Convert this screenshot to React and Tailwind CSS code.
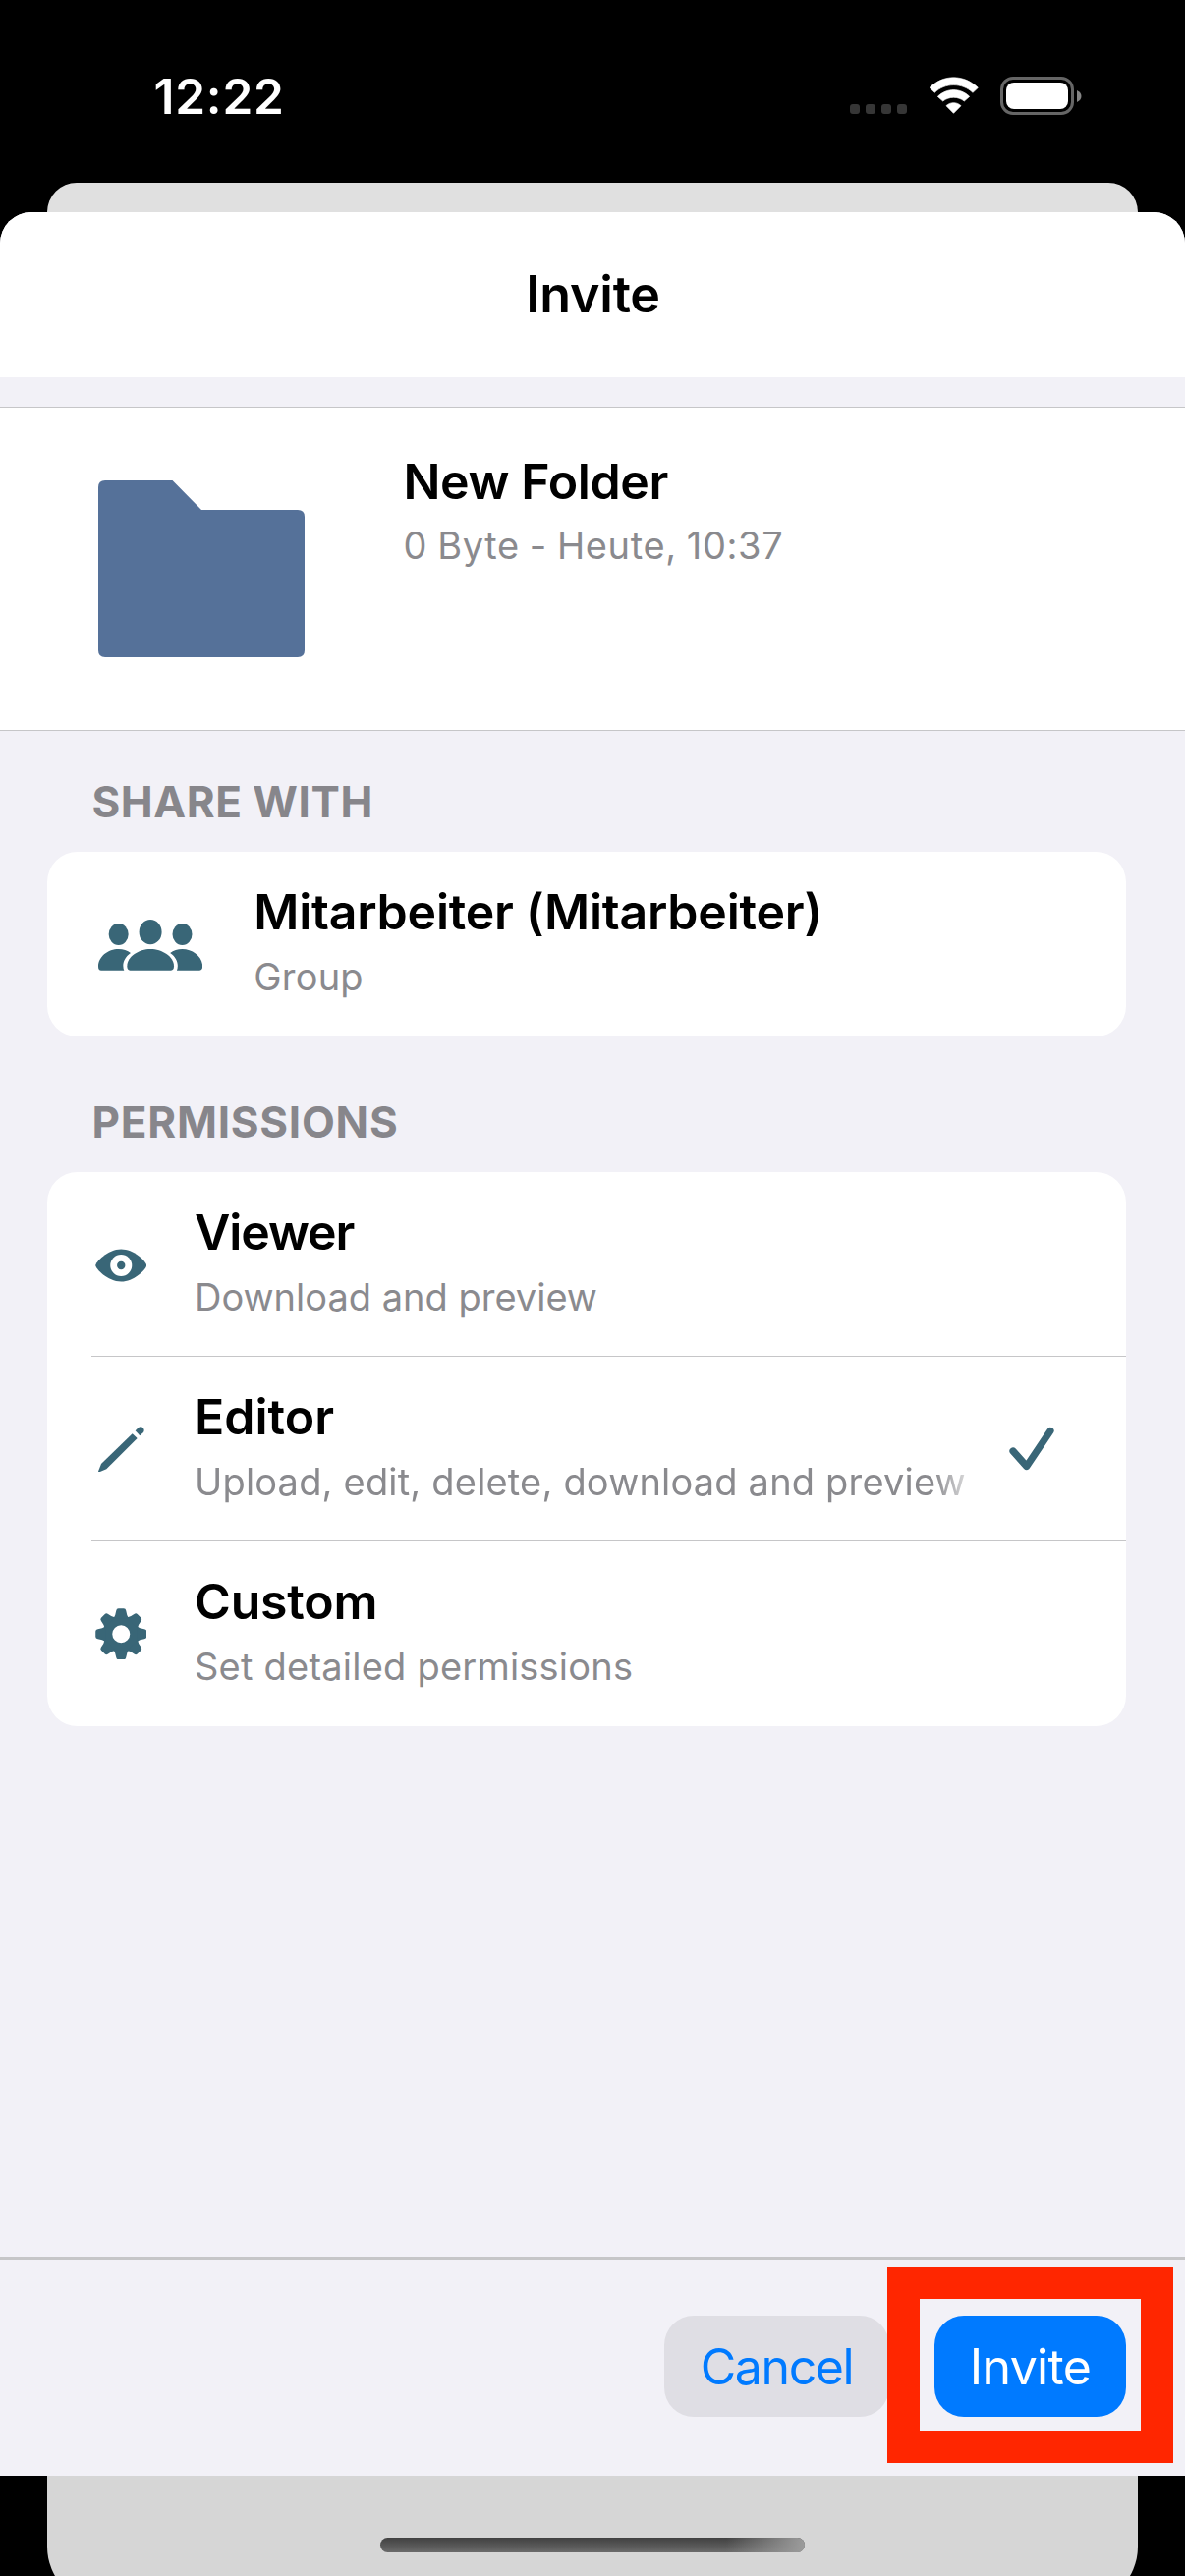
import React from "react";

const TEAL = "#396677";

function WifiIcon() {
  return (
    <svg width="51.33" height="38.33" viewBox="270 40 154 115" fill="#fff" stroke="#fff" strokeWidth="2" strokeLinejoin="round">
      <path d="M273 74C315 32 378 32 421 74L405 89C373 58 320 58 289 89Z" />
      <path d="M298 101C326 74 367 74 395 101L379 115C360 100 333 100 314 115Z" />
      <path d="M324 129C337 117 356 117 369 129L346.500 152Z" />
    </svg>
  );
}

function BatteryIcon() {
  return (
    <div className="flex items-center gap-[3px]">
      <div className="h-[39px] w-[75px] rounded-[13px] border-[3px] border-[#666] p-[3px]">
        <div className="h-full w-full rounded-[8px] bg-white" />
      </div>
      <svg width="4.500" height="12" viewBox="0 0 4.500 12" fill="#858585">
        <path d="M0 0C6 2.500 6 9.500 0 12Z" />
      </svg>
    </div>
  );
}

function StatusBar() {
  return (
    <div className="flex h-[186px] shrink-0 items-start justify-between pt-[68px] pr-[105.500px] pl-[156.500px] text-white">
      <span className="text-[49.500px] leading-[60px] font-semibold tracking-[0.8px]">12:22</span>
      <div className="flex h-[59px] items-center">
        <div className="mt-[27px] flex gap-[6px]">
          {[0, 1, 2, 3].map((dot) => (
            <span key={dot} className="size-[10px] rounded-[3px] bg-[#363636]" />
          ))}
        </div>
        <div className="ml-[22px]">
          <WifiIcon />
        </div>
        <div className="ml-[21.500px]">
          <BatteryIcon />
        </div>
      </div>
    </div>
  );
}

function FolderIcon() {
  return (
    <svg width="210" height="180" viewBox="0 0 210 180" fill="#557199">
      <path d="M7 0H75.500L105 30H203Q210 30 210 37V173Q210 180 203 180H7Q0 180 0 173V7Q0 0 7 0Z" />
    </svg>
  );
}

function GroupIcon() {
  const side = "M30 190C30 160 60 137 92 137C106 137 119 141 129 149C112 161 106 175 106 188Q106 196 109 202H39Q30 202 30 190Z";
  return (
    <svg width="106.33" height="52" viewBox="30 47 319 156" fill={TEAL}>
      <ellipse cx="92" cy="92" rx="30" ry="33" />
      <ellipse cx="286.500" cy="92" rx="30" ry="33" />
      <ellipse cx="189.250" cy="85" rx="34.500" ry="38" />
      <path d={side} />
      <path d={side} transform="translate(378.500 0) scale(-1 1)" />
      <path d="M118 189C118 160 154 137 189.500 137C225 137 261 160 261 189Q261 202 252 202H127Q118 202 118 189Z" />
    </svg>
  );
}

function EyeIcon() {
  return (
    <svg className="mt-px" width="52.500" height="34" viewBox="35.250 61 157.500 102">
      <path fill={TEAL} d="M36 112C36 103 72 62.500 114 62.500C156 62.500 192 103 192 112C192 121 156 161.500 114 161.500C72 161.500 36 121 36 112Z" />
      <circle cx="114" cy="112" r="33" fill="#fff" />
      <circle cx="114" cy="112" r="12.500" fill={TEAL} />
    </svg>
  );
}

function PencilIcon() {
  return (
    <svg width="47" height="46.67" viewBox="45 605 141 140" fill={TEAL}>
      <path d="M149 627L164 641L70 735L48 744Q44 745 45.500 741L54 719Z" />
      <path d="M158 618L172 633L182 624C191 615 178 600 168 608Z" />
    </svg>
  );
}

function GearIcon() {
  return (
    <svg width="52.500" height="52.500" viewBox="-78.750 -78.750 157.500 157.500" fill={TEAL}>
      <circle r="41" fill="none" stroke={TEAL} strokeWidth="28" />
      {[0, 45, 90, 135, 180, 225, 270, 315].map((angle) => (
        <path
          key={angle}
          transform={`rotate(${angle})`}
          d="M-23 -48Q-17 -56 -15 -71Q-14 -78 -8 -78H8Q14 -78 15 -71Q17 -56 23 -48Z"
        />
      ))}
    </svg>
  );
}

function CheckIcon() {
  return (
    <svg width="46" height="46" viewBox="1027 1452 46 46" fill="none" stroke={TEAL} strokeWidth="7.200" strokeLinecap="round" strokeLinejoin="round">
      <path d="M1031 1477L1044.800 1492.500L1069 1456.500" />
    </svg>
  );
}

function SectionTitle({ className, children }) {
  return (
    <h2 className={`pl-[93.500px] text-[44px] leading-[52px] font-bold text-[#87868b] ${className}`}>{children}</h2>
  );
}

const permissions = [
  {
    title: "Viewer",
    titleClass: "tracking-[-1.1px]",
    text: "Download and preview",
    textClass: "",
    Icon: EyeIcon,
  },
  {
    title: "Editor",
    titleClass: "",
    text: "Upload, edit, delete, download and preview",
    textClass: "tracking-[0.18px] [mask-image:linear-gradient(to_right,black_752px,transparent_802px)]",
    Icon: PencilIcon,
    selected: true,
  },
  {
    title: "Custom",
    titleClass: "tracking-[-0.2px]",
    text: "Set detailed permissions",
    textClass: "tracking-[0.22px]",
    Icon: GearIcon,
  },
];

function PermissionRow({ title, titleClass, text, textClass, Icon, selected, first }) {
  return (
    <div className={`ml-[45px] flex border-[#c6c6c8] ${first ? "h-[187px]" : "h-[188px] border-t"}`}>
      <div className="flex w-[60px] items-center justify-center pt-px">
        <Icon />
      </div>
      <div className="ml-[45px] w-[802px] pt-[31px]">
        <div className={`text-[50px] leading-[60px] font-semibold ${titleClass}`}>{title}</div>
        <div className={`mt-[13px] text-[38px] leading-[46px] whitespace-nowrap text-[#8a8a8e] ${textClass}`}>{text}</div>
      </div>
      {selected && (
        <div className="ml-[27px] flex items-center">
          <CheckIcon />
        </div>
      )}
    </div>
  );
}

export default function App() {
  return (
    <div className="flex h-[2622px] w-[1206px] flex-col overflow-hidden bg-black font-['Inter',sans-serif] text-black">
      <StatusBar />
      <div className="mr-[48px] ml-[48px] h-[30px] shrink-0 rounded-t-[30px] bg-[#e0e0e0]" />

      <main className="flex h-[2304px] shrink-0 flex-col overflow-hidden rounded-t-[32px] bg-[#f2f1f7]">
        <header className="h-[168px] shrink-0 bg-white pt-[53px] text-center">
          <h1 className="pl-[1px] text-[52px] leading-[62px] font-semibold tracking-[-0.25px]">Invite</h1>
        </header>

        <section className="mt-[30px] flex h-[330px] shrink-0 border-y border-[#c6c6c8] bg-white">
          <div className="pt-[74px] pl-[100px]">
            <FolderIcon />
          </div>
          <div className="pt-[45px] pl-[100.500px]">
            <div className="text-[50px] leading-[60px] font-semibold tracking-[-0.38px]">New Folder</div>
            <div className="mt-[12px] text-[38px] leading-[46px] tracking-[0.62px] text-[#8a8a8e] [word-spacing:-1.2px]">0 Byte - Heute, 10:37</div>
          </div>
        </section>

        <SectionTitle className="mt-[46px] tracking-[0.55px]">SHARE WITH</SectionTitle>
        <section className="mt-[25px] mr-[60px] ml-[48px] flex h-[188px] shrink-0 rounded-[31px] bg-white">
          <div className="pt-[69px] pl-[52px]">
            <GroupIcon />
          </div>
          <div className="pt-[31px] pl-[52px]">
            <div className="text-[50px] leading-[60px] font-semibold tracking-[-0.23px]">Mitarbeiter (Mitarbeiter)</div>
            <div className="mt-[13px] text-[38px] leading-[46px] tracking-[0.17px] text-[#8a8a8e]">Group</div>
          </div>
        </section>

        <SectionTitle className="mt-[61px] tracking-[0.75px]">PERMISSIONS</SectionTitle>
        <section className="mt-[25px] mr-[60px] ml-[48px] h-[564px] shrink-0 rounded-[31px] bg-white">
          {permissions.map((permission, index) => (
            <PermissionRow key={permission.title} {...permission} first={index === 0} />
          ))}
        </section>

        <footer className="relative mt-auto flex h-[223px] shrink-0 justify-end gap-[46px] border-t-[3px] border-[#c6c6c8] pt-[57px] pr-[60px]">
          <button className="h-[103px] w-[229px] rounded-[30px] bg-[#dfdee4] text-[50px] leading-[60px] tracking-[-1.38px] text-[#007aff]">
            Cancel
          </button>
          <button className="h-[103px] w-[195px] rounded-[30px] bg-[#007aff] text-[50px] leading-[60px] tracking-[-0.66px] text-white">
            Invite
          </button>
          <div className="absolute top-[7px] right-[12px] h-[200px] w-[291px] border-[33px] border-[#ff2600]" />
        </footer>
      </main>

      <div className="mx-[48px] h-[132px] shrink-0 rounded-b-[60px] bg-[#d6d6d6] pt-[63px]">
        <div className="mx-auto h-[15px] w-[432px] overflow-hidden rounded-full bg-gradient-to-b from-[#414141] to-[#6b6b6b]">
          <div className="ml-auto h-full w-[80px] bg-gradient-to-r from-transparent to-[#9c9c9c]" />
        </div>
      </div>
    </div>
  );
}
